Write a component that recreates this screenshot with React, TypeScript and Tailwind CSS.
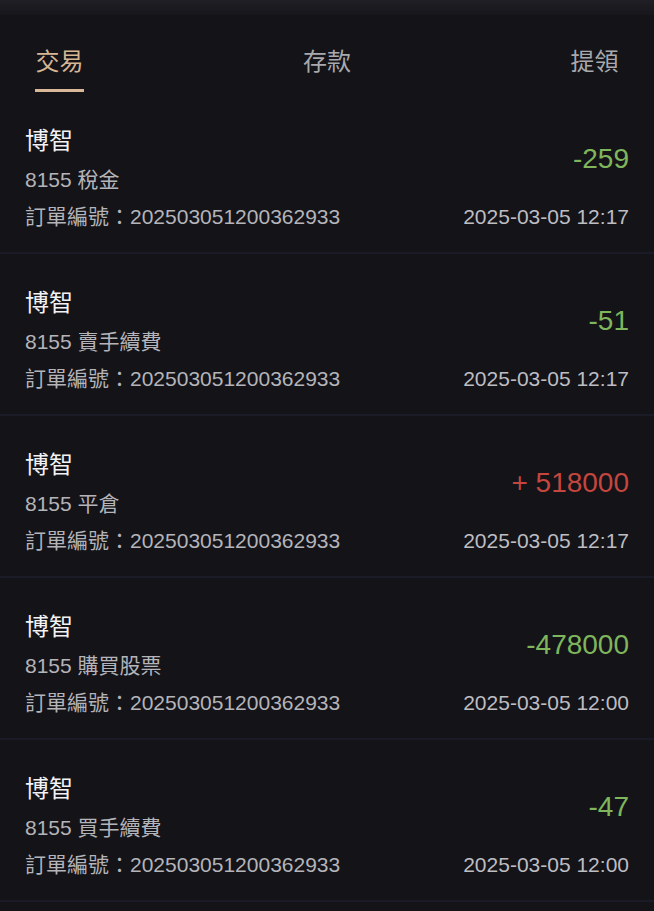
import React from 'react';

type Txn = {
  sub: string;
  amount: string;
  positive: boolean;
  time: string;
};

const rows: Txn[] = [
  { sub: '8155 稅金', amount: '-259', positive: false, time: '2025-03-05 12:17' },
  { sub: '8155 賣手續費', amount: '-51', positive: false, time: '2025-03-05 12:17' },
  { sub: '8155 平倉', amount: '+ 518000', positive: true, time: '2025-03-05 12:17' },
  { sub: '8155 購買股票', amount: '-478000', positive: false, time: '2025-03-05 12:00' },
  { sub: '8155 買手續費', amount: '-47', positive: false, time: '2025-03-05 12:00' },
];

const font = { fontFamily: '"Liberation Sans", "Noto Sans CJK TC", sans-serif' };

const Tab: React.FC<{ label: string; active?: boolean }> = ({ label, active }) => (
  <div className="flex flex-col items-center pt-[32px]">
    <span className={`text-[24px] leading-[30px] ${active ? 'text-[#d7b694]' : 'text-[#a8a8ad]'}`}>{label}</span>
    <div className={`mt-[12px] h-[3px] w-[49px] ${active ? 'bg-[#d9b89a]' : 'bg-transparent'}`} />
  </div>
);

const Row: React.FC<{ t: Txn }> = ({ t }) => (
  <div className="flex justify-between border-b-2 border-[#1b1b27] pl-[25px] pr-[25px] pt-[34px] pb-[20px]">
    <div className="flex flex-col">
      <span className="text-[24px] leading-[30px] text-[#f2f2f4]">博智</span>
      <span className="mt-[9px] text-[21px] leading-[30px] text-[#b4b4b9]">{t.sub}</span>
      <span className="mt-[7px] text-[21px] leading-[30px] text-[#b4b4b9]">訂單編號：202503051200362933</span>
    </div>
    <div className="flex flex-col items-end">
      <div className="flex h-[66px] items-center">
        <span className={`text-[28px] leading-[30px] ${t.positive ? 'text-[#c4463e]' : 'text-[#7fb65c]'}`}>{t.amount}</span>
      </div>
      <span className="mt-[10px] text-[21px] leading-[30px] text-[#bdbdc2]">{t.time}</span>
    </div>
  </div>
);

const App: React.FC = () => {
  return (
    <div className="min-h-screen w-full bg-[#131318]" style={font}>
      <div className="h-[15px] bg-gradient-to-b from-[#1f1f25] to-[#16161b]" />
      <div className="flex justify-between px-[35px]">
        <Tab label="交易" active />
        <Tab label="存款" />
        <Tab label="提領" />
      </div>
      {rows.map((r, i) => (
        <Row key={i} t={r} />
      ))}
    </div>
  );
};

export default App;
